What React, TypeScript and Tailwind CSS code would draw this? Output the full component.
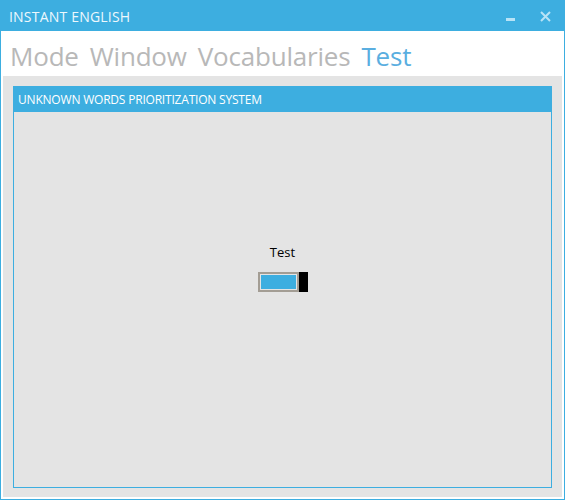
import React from 'react';

const menu = ['Mode', 'Window', 'Vocabularies', 'Test'];

const App: React.FC = () => {
  return (
    <div className="w-[565px] h-[500px] bg-[#3daee0] p-px flex font-['Open_Sans',sans-serif]">
      <div className="flex-1 bg-white flex flex-col">
        {/* title bar */}
        <div className="h-[30px] bg-[#3daee0] flex items-center pl-2 pr-3 shrink-0">
          <span className="text-[14px] text-[#eef8fd] tracking-[0.2px]">INSTANT ENGLISH</span>
          <div className="ml-auto flex items-center gap-[25px]">
            <div className="w-[9px] h-[3px] bg-[#b8e3f6] mt-[7px]" />
            <svg width="11" height="11" viewBox="0 0 11 11" className="mr-[1px]">
              <path d="M1 1L10 10M10 1L1 10" stroke="#b8e3f6" strokeWidth="2" />
            </svg>
          </div>
        </div>

        {/* menu */}
        <div className="h-[45px] flex items-center gap-[11px] pl-[9px] pt-[4px] shrink-0">
          {menu.map((m) => (
            <span
              key={m}
              className={`text-[26px] leading-none tracking-[-0.2px] ${m === 'Test' ? 'text-[#5aaee0]' : 'text-[#b8b8b8]'}`}
            >
              {m}
            </span>
          ))}
        </div>

        {/* content */}
        <div className="flex-1 mx-[2px] mb-[2px] bg-[#e4e4e4] pt-[10px] px-[10px] pb-[9px] flex">
          <div className="flex-1 bg-[#3daee0] p-px flex">
            <div className="flex-1 bg-[#e4e4e4] flex flex-col">
              <div className="h-[25px] bg-[#3daee0] flex items-center pl-1 shrink-0">
                <span className="text-[12px] text-white tracking-[-0.2px]">UNKNOWN WORDS PRIORITIZATION SYSTEM</span>
              </div>
              <div className="flex-1 flex flex-col items-center pt-[132px]">
                <span className="text-[13px] leading-[17px] text-black">Test</span>
                <div className="mt-[11px] flex">
                  <div className="w-[41px] h-[20px] bg-[#a39d94] p-[2px]">
                    <div className="w-full h-full bg-[#e4e4e4] p-px">
                      <div className="w-full h-full bg-[#3daee0]" />
                    </div>
                  </div>
                  <div className="w-[9px] h-[20px] bg-black" />
                </div>
              </div>
            </div>
          </div>
        </div>
      </div>
    </div>
  );
};

export default App;
